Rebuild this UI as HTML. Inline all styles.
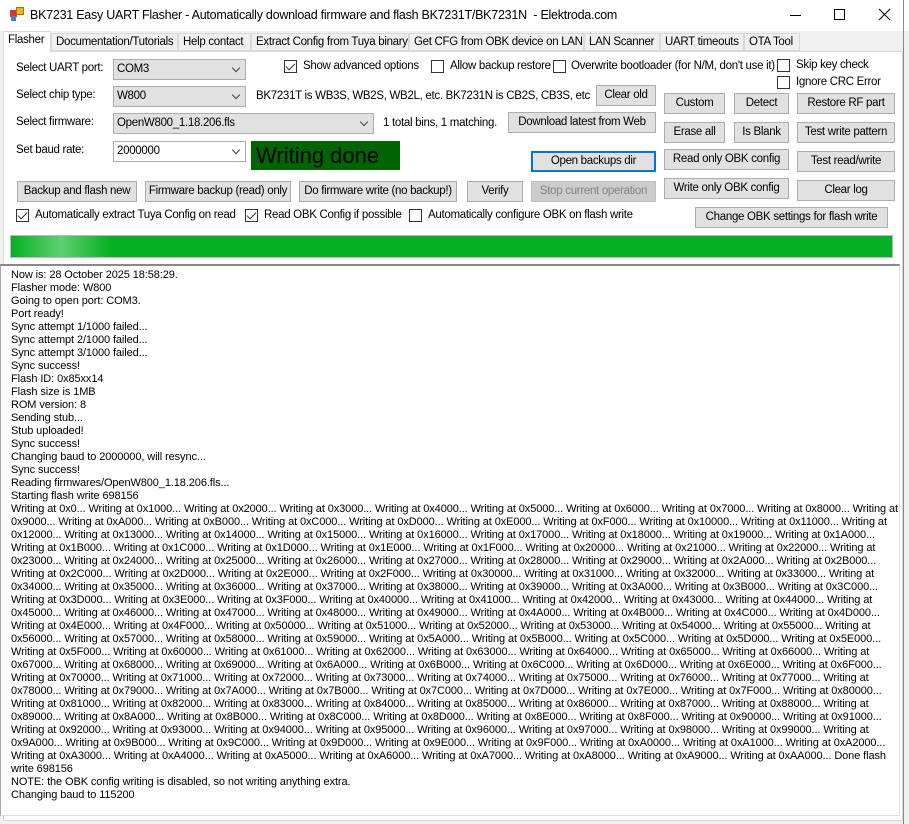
<!DOCTYPE html>
<html><head><meta charset="utf-8"><style>
*{box-sizing:border-box;margin:0;padding:0}
body{width:909px;height:824px;background:#f0f0f0;font-family:"Liberation Sans",sans-serif;font-size:11.5px;letter-spacing:-0.3px;color:#000;position:relative;overflow:hidden}
.abs{position:absolute}
.title{left:0;top:0;width:909px;height:31px;background:#fff}
.tab{position:absolute;top:33px;height:18px;border:1px solid #d9d9d9;background:#f0f0f0;font-size:11.5px;line-height:16px;padding:0 4px;white-space:nowrap;overflow:hidden}
.page{left:3px;top:51px;width:900px;height:770px;background:#fff;border:1px solid #d9d9d9}
.btn{position:absolute;background:#e1e1e1;border:1px solid #adadad;font-size:11.5px;text-align:center;white-space:nowrap;line-height:19px;overflow:hidden}
.combo{position:absolute;height:21px;background:#e1e1e1;border:1px solid #adadad;font-size:11.5px;line-height:19px;padding-left:3px}
.combo:after{content:"";position:absolute;right:6px;top:5px;width:5px;height:5px;border-right:1px solid #444;border-bottom:1px solid #444;transform:rotate(45deg)}
.lbl{position:absolute;font-size:11.5px;white-space:nowrap}
.cb{position:absolute;width:13px;height:13px;border:1px solid #333;background:#fff}
.cb.on:after{content:"";position:absolute;left:3px;top:0px;width:4px;height:8px;border-right:1px solid #333;border-bottom:1px solid #333;transform:rotate(45deg)}
.log{left:0;top:264px;width:900px;height:552px;background:#fff;border-top:2px solid #888;border-left:1px solid #aaa;border-right:1px solid #ddd;border-bottom:1px solid #ddd;padding:3px 0 0 10px;font-size:11px;line-height:13px;white-space:pre;overflow:hidden;letter-spacing:-0.1px}
</style></head><body>
<div class="abs title"></div>
<div class="abs" style="left:10px;top:10px;width:7px;height:7px;background:#d33"></div>
<div class="abs" style="left:16px;top:7px;width:8px;height:8px;background:#e9b820;border:1px solid #a07a00"></div>
<div class="abs" style="left:11px;top:16px;width:5px;height:5px;background:#4a7fd0"></div>
<div class="lbl" style="left:30px;top:8px;font-size:12.5px;letter-spacing:-0.25px">BK7231 Easy UART Flasher - Automatically download firmware and flash BK7231T/BK7231N&nbsp; - Elektroda.com</div>
<div class="abs" style="left:790px;top:15px;width:11px;height:1px;background:#000"></div>
<div class="abs" style="left:834px;top:9px;width:11px;height:11px;border:1px solid #000"></div>
<svg class="abs" style="left:878px;top:8px" width="13" height="13"><path d="M1 1L12 12M12 1L1 12" stroke="#000" stroke-width="1"/></svg>

<div class="abs page"></div>
<div class="tab" style="left:3px;top:31px;height:21px;background:#fff;border-bottom:none;width:48px">Flasher</div>
<div class="tab" style="left:51px;width:127px">Documentation/Tutorials</div>
<div class="tab" style="left:178px;width:73px">Help contact</div>
<div class="tab" style="left:251px;width:158px">Extract Config from Tuya binary</div>
<div class="tab" style="left:409px;width:175px">Get CFG from OBK device on LAN</div>
<div class="tab" style="left:584px;width:76px">LAN Scanner</div>
<div class="tab" style="left:660px;width:84px">UART timeouts</div>
<div class="tab" style="left:744px;width:56px">OTA Tool</div>

<div class="lbl" style="left:16px;top:62px">Select UART port:</div>
<div class="combo" style="left:113px;top:59px;width:133px">COM3</div>
<div class="lbl" style="left:16px;top:89px">Select chip type:</div>
<div class="combo" style="left:113px;top:86px;width:133px">W800</div>
<div class="lbl" style="left:16px;top:116px">Select firmware:</div>
<div class="combo" style="left:113px;top:113px;width:261px">OpenW800_1.18.206.fls</div>
<div class="lbl" style="left:16px;top:144px">Set baud rate:</div>
<div class="combo" style="left:113px;top:141px;width:133px;background:#fff">2000000</div>
<div class="abs" style="left:251px;top:141px;width:149px;height:29px;background:#006400;font-size:22px;letter-spacing:0;line-height:30px;padding-left:5px">Writing done</div>

<div class="cb on" style="left:284px;top:60px"></div><div class="lbl" style="left:303px;top:60px">Show advanced options</div>
<div class="cb" style="left:431px;top:60px"></div><div class="lbl" style="left:450px;top:60px">Allow backup restore</div>
<div class="cb" style="left:553px;top:60px"></div><div class="lbl" style="left:571px;top:60px">Overwrite bootloader (for N/M, don't use it)</div>
<div class="cb" style="left:777px;top:59px"></div><div class="lbl" style="left:796px;top:59px">Skip key check</div>
<div class="cb" style="left:777px;top:76px"></div><div class="lbl" style="left:796px;top:76px">Ignore CRC Error</div>

<div class="lbl" style="left:256px;top:90px">BK7231T is WB3S, WB2S, WB2L, etc. BK7231N is CB2S, CB3S, etc</div>
<div class="btn" style="left:596px;top:85px;width:60px">Clear old</div>
<div class="lbl" style="left:383px;top:117px">1 total bins, 1 matching.</div>
<div class="btn" style="left:508px;top:112px;width:148px">Download latest from Web</div>
<div class="btn" style="left:531px;top:151px;width:125px;border:2px solid #0078d7;line-height:17px">Open backups dir</div>

<div class="btn" style="left:664px;top:93px;width:61px">Custom</div>
<div class="btn" style="left:734px;top:93px;width:55px">Detect</div>
<div class="btn" style="left:797px;top:93px;width:98px">Restore RF part</div>
<div class="btn" style="left:664px;top:122px;width:61px">Erase all</div>
<div class="btn" style="left:734px;top:122px;width:55px">Is Blank</div>
<div class="btn" style="left:797px;top:122px;width:98px">Test write pattern</div>
<div class="btn" style="left:664px;top:149px;width:125px">Read only OBK config</div>
<div class="btn" style="left:797px;top:151px;width:98px">Test read/write</div>
<div class="btn" style="left:664px;top:178px;width:125px">Write only OBK config</div>
<div class="btn" style="left:797px;top:180px;width:98px">Clear log</div>
<div class="btn" style="left:695px;top:207px;width:193px">Change OBK settings for flash write</div>

<div class="btn" style="left:17px;top:181px;width:120px">Backup and flash new</div>
<div class="btn" style="left:145px;top:181px;width:146px">Firmware backup (read) only</div>
<div class="btn" style="left:299px;top:181px;width:158px">Do firmware write (no backup!)</div>
<div class="btn" style="left:467px;top:181px;width:56px">Verify</div>
<div class="btn" style="left:531px;top:181px;width:125px;background:#ccc;color:#838383;border-color:#bfbfbf">Stop current operation</div>

<div class="cb on" style="left:16px;top:209px"></div><div class="lbl" style="left:35px;top:209px">Automatically extract Tuya Config on read</div>
<div class="cb on" style="left:245px;top:209px"></div><div class="lbl" style="left:264px;top:209px">Read OBK Config if possible</div>
<div class="cb" style="left:409px;top:209px"></div><div class="lbl" style="left:428px;top:209px">Automatically configure OBK on flash write</div>

<div class="abs" style="left:10px;top:235px;width:883px;height:23px;border:1px solid #bcbcbc;background:#06b025"></div>
<div class="abs" style="left:11px;top:236px;width:100px;height:21px;background:linear-gradient(90deg,#06b025,#5fd070 50%,#06b025)"></div>

<div class="abs log">Now is: 28 October 2025 18:58:29.
Flasher mode: W800
Going to open port: COM3.
Port ready!
Sync attempt 1/1000 failed...
Sync attempt 2/1000 failed...
Sync attempt 3/1000 failed...
Sync success!
Flash ID: 0x85xx14
Flash size is 1MB
ROM version: 8
Sending stub...
Stub uploaded!
Sync success!
Changing baud to 2000000, will resync...
Sync success!
Reading firmwares/OpenW800_1.18.206.fls...
Starting flash write 698156
Writing at 0x0... Writing at 0x1000... Writing at 0x2000... Writing at 0x3000... Writing at 0x4000... Writing at 0x5000... Writing at 0x6000... Writing at 0x7000... Writing at 0x8000... Writing at
0x9000... Writing at 0xA000... Writing at 0xB000... Writing at 0xC000... Writing at 0xD000... Writing at 0xE000... Writing at 0xF000... Writing at 0x10000... Writing at 0x11000... Writing at
0x12000... Writing at 0x13000... Writing at 0x14000... Writing at 0x15000... Writing at 0x16000... Writing at 0x17000... Writing at 0x18000... Writing at 0x19000... Writing at 0x1A000...
Writing at 0x1B000... Writing at 0x1C000... Writing at 0x1D000... Writing at 0x1E000... Writing at 0x1F000... Writing at 0x20000... Writing at 0x21000... Writing at 0x22000... Writing at
0x23000... Writing at 0x24000... Writing at 0x25000... Writing at 0x26000... Writing at 0x27000... Writing at 0x28000... Writing at 0x29000... Writing at 0x2A000... Writing at 0x2B000...
Writing at 0x2C000... Writing at 0x2D000... Writing at 0x2E000... Writing at 0x2F000... Writing at 0x30000... Writing at 0x31000... Writing at 0x32000... Writing at 0x33000... Writing at
0x34000... Writing at 0x35000... Writing at 0x36000... Writing at 0x37000... Writing at 0x38000... Writing at 0x39000... Writing at 0x3A000... Writing at 0x3B000... Writing at 0x3C000...
Writing at 0x3D000... Writing at 0x3E000... Writing at 0x3F000... Writing at 0x40000... Writing at 0x41000... Writing at 0x42000... Writing at 0x43000... Writing at 0x44000... Writing at
0x45000... Writing at 0x46000... Writing at 0x47000... Writing at 0x48000... Writing at 0x49000... Writing at 0x4A000... Writing at 0x4B000... Writing at 0x4C000... Writing at 0x4D000...
Writing at 0x4E000... Writing at 0x4F000... Writing at 0x50000... Writing at 0x51000... Writing at 0x52000... Writing at 0x53000... Writing at 0x54000... Writing at 0x55000... Writing at
0x56000... Writing at 0x57000... Writing at 0x58000... Writing at 0x59000... Writing at 0x5A000... Writing at 0x5B000... Writing at 0x5C000... Writing at 0x5D000... Writing at 0x5E000...
Writing at 0x5F000... Writing at 0x60000... Writing at 0x61000... Writing at 0x62000... Writing at 0x63000... Writing at 0x64000... Writing at 0x65000... Writing at 0x66000... Writing at
0x67000... Writing at 0x68000... Writing at 0x69000... Writing at 0x6A000... Writing at 0x6B000... Writing at 0x6C000... Writing at 0x6D000... Writing at 0x6E000... Writing at 0x6F000...
Writing at 0x70000... Writing at 0x71000... Writing at 0x72000... Writing at 0x73000... Writing at 0x74000... Writing at 0x75000... Writing at 0x76000... Writing at 0x77000... Writing at
0x78000... Writing at 0x79000... Writing at 0x7A000... Writing at 0x7B000... Writing at 0x7C000... Writing at 0x7D000... Writing at 0x7E000... Writing at 0x7F000... Writing at 0x80000...
Writing at 0x81000... Writing at 0x82000... Writing at 0x83000... Writing at 0x84000... Writing at 0x85000... Writing at 0x86000... Writing at 0x87000... Writing at 0x88000... Writing at
0x89000... Writing at 0x8A000... Writing at 0x8B000... Writing at 0x8C000... Writing at 0x8D000... Writing at 0x8E000... Writing at 0x8F000... Writing at 0x90000... Writing at 0x91000...
Writing at 0x92000... Writing at 0x93000... Writing at 0x94000... Writing at 0x95000... Writing at 0x96000... Writing at 0x97000... Writing at 0x98000... Writing at 0x99000... Writing at
0x9A000... Writing at 0x9B000... Writing at 0x9C000... Writing at 0x9D000... Writing at 0x9E000... Writing at 0x9F000... Writing at 0xA0000... Writing at 0xA1000... Writing at 0xA2000...
Writing at 0xA3000... Writing at 0xA4000... Writing at 0xA5000... Writing at 0xA6000... Writing at 0xA7000... Writing at 0xA8000... Writing at 0xA9000... Writing at 0xAA000... Done flash
write 698156
NOTE: the OBK config writing is disabled, so not writing anything extra.
Changing baud to 115200</div>
<div class="abs" style="left:903px;top:0;width:1px;height:824px;background:#888"></div>
</body></html>
